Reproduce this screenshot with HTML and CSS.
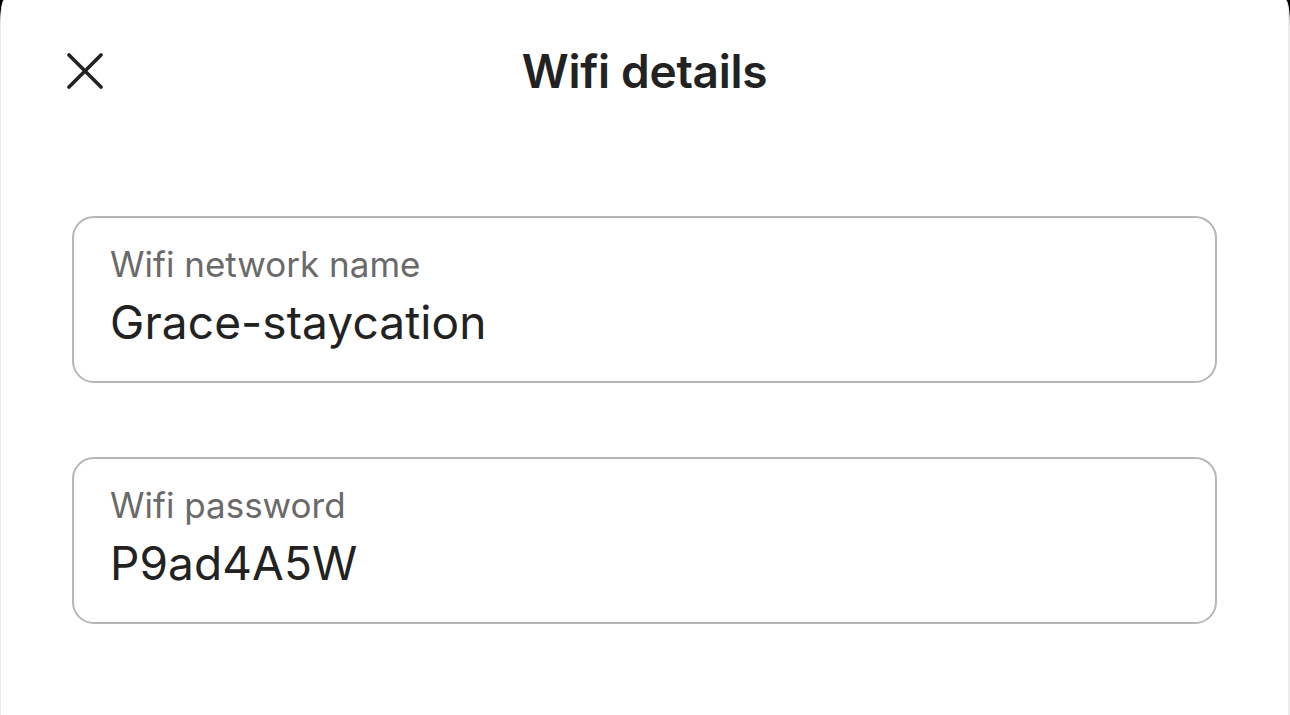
FILE: index.html
```html
<!DOCTYPE html>
<html lang="en">
<head>
<meta charset="UTF-8" />
<meta name="viewport" content="width=device-width, initial-scale=1" />
<title>Wifi details</title>
<link rel="stylesheet" href="styles.css">
</head>
<body>
<main class="sheet">
  <header class="sheet__header">
    <button type="button" class="close" aria-label="Close">
      <svg width="36" height="36" viewBox="0 0 36 36" aria-hidden="true">
        <path d="M2 2 L34 34 M34 2 L2 34" stroke="#222" stroke-width="3.6" stroke-linecap="round" fill="none"/>
      </svg>
    </button>
    <h1 class="sheet__title">Wifi details</h1>
  </header>

  <section class="fields">
    <div class="field">
      <span class="field__label">Wifi network name</span>
      <span class="field__value">Grace-staycation</span>
    </div>
    <div class="field">
      <span class="field__label">Wifi password</span>
      <span class="field__value">P9ad4A5W</span>
    </div>
  </section>
</main>
</body>
</html>
```

FILE: styles.css
```css
/* folha branca sobre fundo escuro */
body {
  margin: 0;
  background: #000;
  font-family: 'Inter', 'Noto Sans', sans-serif;
  color: #222;
}
.sheet {
  background: #fff;
  min-height: 715px;
  border-left: 1px solid #ececec;
  border-right: 2px solid #ececec;
  border-top-left-radius: 4px 26px;
  border-top-right-radius: 4px 26px;
  box-sizing: border-box;
}
.sheet__header {
  position: relative;
  height: 142px;
  display: flex;
  align-items: center;
  justify-content: center;
}
.close {
  position: absolute;
  left: 66px;
  top: 53px;
  background: none;
  border: none;
  padding: 0;
  width: 36px;
  height: 36px;
  cursor: pointer;
}
.close svg { display: block; }
.sheet__title {
  margin: 0;
  font-size: 46px;
  font-weight: 600;
  letter-spacing: -0.3px;
}
.fields {
  display: flex;
  flex-direction: column;
  gap: 74px;
  padding: 74px 71px 0 71px;
}
.field {
  border: 2px solid #b6b6b6;
  border-radius: 22px;
  height: 167px;
  box-sizing: border-box;
  padding: 24px 36px 0 36px;
  display: flex;
  flex-direction: column;
}
.field__label {
  font-size: 35px;
  line-height: 44px;
  color: #6a6a6a;
}
.field__value {
  margin-top: 6px;
  font-size: 46px;
  line-height: 60px;
  letter-spacing: 0.1px;
  color: #222;
}
```
